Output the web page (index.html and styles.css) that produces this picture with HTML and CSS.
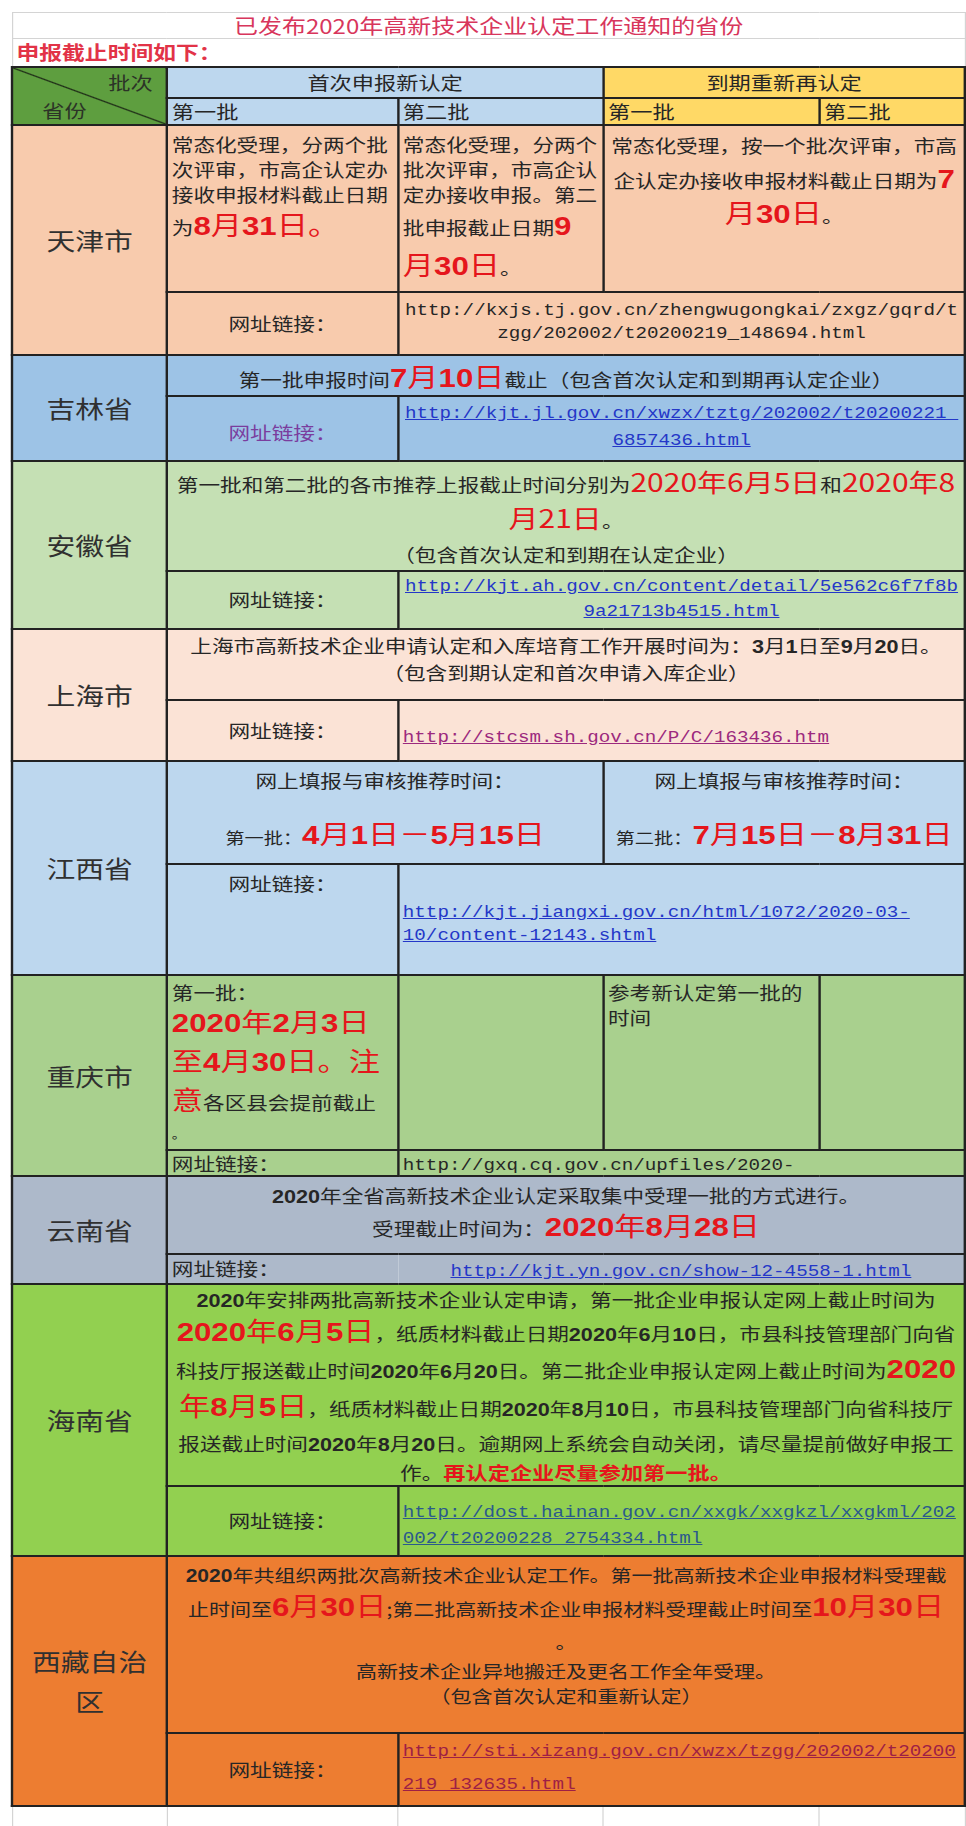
FILE: index.html
```html
<!DOCTYPE html>
<html lang="zh-CN">
<head>
<meta charset="utf-8">
<title>已发布2020年高新技术企业认定工作通知的省份</title>
<link rel="stylesheet" href="styles.css">
</head>
<body>
<div class="sheet">
<table class="grid">
<colgroup><col class="c1"><col class="c2"><col class="c3"><col class="c4"><col class="c5"></colgroup>
<tbody>
<tr class="r-title"><td colspan="5" class="title">已发布2020年高新技术企业认定工作通知的省份</td></tr>
<tr class="r-sub"><td colspan="5" class="subtitle">申报截止时间如下：</td></tr>

<tr class="r-h1">
  <td rowspan="2" class="corner"><div class="corner-in"><span class="c-top">批次</span><span class="c-bot">省份</span></div></td>
  <td colspan="2" class="h-blue ctr">首次申报新认定</td>
  <td colspan="2" class="h-yellow ctr">到期重新再认定</td>
</tr>
<tr class="r-h2">
  <td class="h-blue">第一批</td>
  <td class="h-blue">第二批</td>
  <td class="h-yellow">第一批</td>
  <td class="h-yellow">第二批</td>
</tr>

<!-- 天津市 -->
<tr class="r-tj1 bg-tj">
  <td rowspan="2" class="prov">天津市</td>
  <td class="top pt6">
    <div class="l25">常态化受理，分两个批</div>
    <div class="l25">次评审，市高企认定办</div>
    <div class="l25">接收申报材料截止日期</div>
    <div class="l40">为<span class="red"><b>8</b>月<b>31</b>日。</span></div>
  </td>
  <td class="top pt6">
    <div class="l25">常态化受理，分两个</div>
    <div class="l25">批次评审，市高企认</div>
    <div class="l25">定办接收申报。第二</div>
    <div class="l40">批申报截止日期<span class="red"><b>9</b></span></div>
    <div class="l40"><span class="red">月<b>30</b>日</span>。</div>
  </td>
  <td colspan="2" class="top ctr pt2">
    <div class="l35">常态化受理，按一个批次评审，市高</div>
    <div class="l35">企认定办接收申报材料截止日期为<span class="red"><b>7</b></span></div>
    <div class="l35"><span class="red">月<b>30</b>日</span>。</div>
  </td>
</tr>
<tr class="r-tj2 bg-tj">
  <td class="ctr">网址链接：</td>
  <td colspan="3" class="ctr"><div class="url plain l23">http://kxjs.tj.gov.cn/zhengwugongkai/zxgz/gqrd/t</div><div class="url plain l23">zgg/202002/t20200219_148694.html</div></td>
</tr>

<!-- 吉林省 -->
<tr class="r-jl1 bg-jl">
  <td rowspan="2" class="prov">吉林省</td>
  <td colspan="4" class="ctr pt4">第一批申报时间<span class="red"><b>7</b>月<b>10</b>日</span>截止（包含首次认定和到期再认定企业）</td>
</tr>
<tr class="r-jl2 bg-jl">
  <td class="ctr purple pt8">网址链接：</td>
  <td colspan="3" class="ctr"><div class="url blue l27">http://kjt.jl.gov.cn/xwzx/tztg/202002/t20200221_</div><div class="url blue l27">6857436.html</div></td>
</tr>

<!-- 安徽省 -->
<tr class="r-ah1 bg-ah">
  <td rowspan="2" class="prov">安徽省</td>
  <td colspan="4" class="ctr top pt4">
    <div class="l36">第一批和第二批的各市推荐上报截止时间分别为<span class="red-r">2020年6月5日</span>和<span class="red-r">2020年8</span></div>
    <div class="l36"><span class="red-r">月21日</span>。</div>
    <div class="l32">（包含首次认定和到期在认定企业）</div>
  </td>
</tr>
<tr class="r-ah2 bg-ah">
  <td class="ctr">网址链接：</td>
  <td colspan="3" class="ctr"><div class="url blue l25">http://kjt.ah.gov.cn/content/detail/5e562c6f7f8b</div><div class="url blue l25">9a21713b4515.html</div></td>
</tr>

<!-- 上海市 -->
<tr class="r-sh1 bg-sh">
  <td rowspan="2" class="prov">上海市</td>
  <td colspan="4" class="ctr top pt2">
    <div class="l27">上海市高新技术企业申请认定和入库培育工作开展时间为：<b class="n">3</b>月<b class="n">1</b>日至<b class="n">9</b>月<b class="n">20</b>日。</div>
    <div class="l27">（包含到期认定和首次申请入库企业）</div>
  </td>
</tr>
<tr class="r-sh2 bg-sh">
  <td class="ctr">网址链接：</td>
  <td colspan="3" class="pt8"><span class="url magenta">http://stcsm.sh.gov.cn/P/C/163436.htm</span></td>
</tr>

<!-- 江西省 -->
<tr class="r-jx1 bg-jx">
  <td rowspan="2" class="prov">江西省</td>
  <td colspan="2" class="ctr top pt3">
    <div class="l30">网上填报与审核推荐时间：</div>
    <div class="l34 mt24"><span class="small">第一批：</span><span class="red"><b>4</b>月<b>1</b>日－<b>5</b>月<b>15</b>日</span></div>
  </td>
  <td colspan="2" class="ctr top pt3">
    <div class="l30">网上填报与审核推荐时间：</div>
    <div class="l34 mt24"><span class="small">第二批：</span><span class="red"><b>7</b>月<b>15</b>日－<b>8</b>月<b>31</b>日</span></div>
  </td>
</tr>
<tr class="r-jx2 bg-jx">
  <td class="ctr top pt6">网址链接：</td>
  <td colspan="3" class="top pt37"><div class="url blue l23">http://kjt.jiangxi.gov.cn/html/1072/2020-03-</div><div class="url blue l23">10/content-12143.shtml</div></td>
</tr>

<!-- 重庆市 -->
<tr class="r-cq1 bg-cq">
  <td rowspan="2" class="prov">重庆市</td>
  <td class="top pt4">
    <div class="l25">第一批：</div>
    <div class="l39"><span class="red"><b>2020</b>年<b>2</b>月<b>3</b>日</span></div>
    <div class="l39"><span class="red">至<b>4</b>月<b>30</b>日。注</span></div>
    <div class="l39"><span class="red">意</span>各区县会提前截止</div>
    <div class="l24 tiny">。</div>
  </td>
  <td></td>
  <td class="top pt4">
    <div class="l25">参考新认定第一批的</div>
    <div class="l25">时间</div>
  </td>
  <td></td>
</tr>
<tr class="r-cq2 bg-cq">
  <td>网址链接：</td>
  <td colspan="3"><span class="url plain">http://gxq.cq.gov.cn/upfiles/2020-</span></td>
</tr>

<!-- 云南省 -->
<tr class="r-yn1 bg-yn">
  <td rowspan="2" class="prov">云南省</td>
  <td colspan="4" class="ctr top pt3">
    <div class="l30"><b class="n">2020</b>年全省高新技术企业认定采取集中受理一批的方式进行。</div>
    <div class="l36">受理截止时间为：<span class="red"><b>2020</b>年<b>8</b>月<b>28</b>日</span></div>
  </td>
</tr>
<tr class="r-yn2 bg-yn">
  <td class="noright">网址链接：</td>
  <td colspan="3" class="ctr noleft"><span class="url blue">http://kjt.yn.gov.cn/show-12-4558-1.html</span></td>
</tr>

<!-- 海南省 -->
<tr class="r-hn1 bg-hn">
  <td rowspan="2" class="prov">海南省</td>
  <td colspan="4" class="ctr top hn">
    <div class="l29"><b class="n">2020</b>年安排两批高新技术企业认定申请，第一批企业申报认定网上截止时间为</div>
    <div class="l38"><span class="red"><b>2020</b>年<b>6</b>月<b>5</b>日</span>，纸质材料截止日期<b class="n">2020</b>年<b class="n">6</b>月<b class="n">10</b>日，市县科技管理部门向省</div>
    <div class="l37">科技厅报送截止时间<b class="n">2020</b>年<b class="n">6</b>月<b class="n">20</b>日。第二批企业申报认定网上截止时间为<span class="red"><b>2020</b></span></div>
    <div class="l38"><span class="red">年<b>8</b>月<b>5</b>日</span>，纸质材料截止日期<b class="n">2020</b>年<b class="n">8</b>月<b class="n">10</b>日，市县科技管理部门向省科技厅</div>
    <div class="l33">报送截止时间<b class="n">2020</b>年<b class="n">8</b>月<b class="n">20</b>日。逾期网上系统会自动关闭，请尽量提前做好申报工</div>
    <div class="l25">作。<span class="red-s">再认定企业尽量参加第一批。</span></div>
  </td>
</tr>
<tr class="r-hn2 bg-hn">
  <td class="ctr">网址链接：</td>
  <td colspan="3" class="top pt13"><div class="url teal l26">http://dost.hainan.gov.cn/xxgk/xxgkzl/xxgkml/202</div><div class="url teal l26">002/t20200228_2754334.html</div></td>
</tr>

<!-- 西藏自治区 -->
<tr class="r-xz1 bg-xz">
  <td rowspan="2" class="prov l40">西藏自治<br>区</td>
  <td colspan="4" class="ctr top pt1 xz">
    <div class="l34"><b class="n">2020</b>年共组织两批次高新技术企业认定工作。第一批高新技术企业申报材料受理截</div>
    <div class="l34">止时间至<span class="red"><b>6</b>月<b>30</b>日</span>;第二批高新技术企业申报材料受理截止时间至<span class="red"><b>10</b>月<b>30</b>日</span></div>
    <div class="l32">。</div>
    <div class="l25">高新技术企业异地搬迁及更名工作全年受理。</div>
    <div class="l25">（包含首次认定和重新认定）</div>
  </td>
</tr>
<tr class="r-xz2 bg-xz">
  <td class="ctr">网址链接：</td>
  <td colspan="3" class="top pt2"><div class="url crimson l33">http://sti.xizang.gov.cn/xwzx/tzgg/202002/t20200</div><div class="url crimson l33">219_132635.html</div></td>
</tr>

<tr class="r-blank">
  <td></td><td></td><td></td><td></td><td></td>
</tr>
</tbody>
</table>
</div>
</body>
</html>
```

FILE: styles.css
```css
html, body {
  margin: 0;
  padding: 0;
  background: #ffffff;
}

body {
  font-family: "Noto Sans CJK SC", "Noto Sans", sans-serif;
  color: #262626;
  overflow: hidden;
}

/* the source sheet is rendered horizontally stretched */
.sheet {
  width: 805px;
  box-sizing: border-box;
  padding: 12px 0 0 9.2px;
  transform: scaleX(1.2);
  transform-origin: 0 0;
}

.grid {
  width: 794px;
  border-collapse: collapse;
  table-layout: fixed;
  font-size: 18px;
}

.c1 { width: 129px; }
.c2 { width: 192.5px; }
.c3 { width: 171px; }
.c4 { width: 180px; }
.c5 { width: 121.5px; }

.grid td {
  border: 2px solid #222;
  padding: 0 3px;
  white-space: nowrap;
  vertical-align: middle;
  line-height: 25px;
}

/* row heights */
.r-title { height: 26px; }
.r-sub { height: 28px; }
.r-h1 { height: 31px; }
.r-h2 { height: 27px; }
.r-tj1 { height: 167px; }
.r-tj2 { height: 63px; }
.r-jl1 { height: 41px; }
.r-jl2 { height: 65px; }
.r-ah1 { height: 110px; }
.r-ah2 { height: 58px; }
.r-sh1 { height: 71px; }
.r-sh2 { height: 61px; }
.r-jx1 { height: 103px; }
.r-jx2 { height: 111px; }
.r-cq1 { height: 175px; }
.r-cq2 { height: 26px; }
.r-yn1 { height: 78px; }
.r-yn2 { height: 30px; }
.r-hn1 { height: 202px; }
.r-hn2 { height: 70px; }
.r-xz1 { height: 177px; }
.r-xz2 { height: 73px; }
.r-blank { height: 30px; }

.grid .r-cq2 td { line-height: 20px; }

/* title rows */
.grid td.title {
  border: 1px solid #d4d4d4;
  text-align: center;
  color: #d8365c;
  font-size: 20px;
  line-height: 24px;
}

.grid td.subtitle {
  border: 1px solid #d4d4d4;
  border-bottom: 2px solid #222;
  color: #e23347;
  font-size: 19px;
  font-weight: 700;
  line-height: 26px;
}

/* header */
.grid td.corner {
  padding: 0;
  background-color: #5e9e3f;
  background-image: linear-gradient(to top right, transparent calc(50% - 1.2px), #1d2a16 50%, transparent calc(50% + 1.2px));
  color: #2c3327;
  font-size: 18.5px;
}

.corner-in {
  height: 56px;
  display: flex;
  flex-direction: column;
  justify-content: space-between;
}

.c-top {
  align-self: flex-end;
  padding-right: 11px;
  line-height: 28px;
}

.c-bot {
  align-self: flex-start;
  padding-left: 24px;
  line-height: 28px;
}

.grid td.h-blue { background: #bdd7ee; font-size: 18.5px; }
.grid td.h-yellow { background: #ffd966; font-size: 18.5px; }

/* province row colours */
.bg-tj td { background: #f8cbad; }
.bg-jl td { background: #9dc3e6; }
.bg-ah td { background: #c5e0b4; }
.bg-sh td { background: #fbe3d6; }
.bg-jx td { background: #bdd7ee; }
.bg-cq td { background: #a9d08e; }
.bg-yn td { background: #adb9ca; }
.bg-hn td { background: #92d050; }
.bg-xz td { background: #ed7d31; }

.grid .r-blank td {
  border: 1px solid #d4d4d4;
  border-top: 2px solid #222;
  border-bottom: none;
  background: #fff;
}

.grid td.prov {
  text-align: center;
  font-size: 24px;
  color: #303030;
}

/* alignment helpers */
.ctr { text-align: center; }
.grid td.top { vertical-align: top; }
.grid td.noright { border-right: none; }
.grid td.noleft { border-left: none; }
.pt1 { padding-top: 1px !important; }
.pt2 { padding-top: 2px !important; }
.pt3 { padding-top: 3px !important; }
.pt4 { padding-top: 4px !important; }
.pt6 { padding-top: 6px !important; }
.pt8 { padding-top: 8px !important; }
.pt13 { padding-top: 13px !important; }
.pt37 { padding-top: 37px !important; }
.mt24 { margin-top: 24px; }

.l22 { line-height: 22px; }
.l23 { line-height: 23px; }
.l24 { line-height: 24px; }
.l25 { line-height: 25px; }
.l26 { line-height: 26px; }
.l27 { line-height: 27px; }
.l29 { line-height: 29px; }
.l30 { line-height: 30px; }
.l32 { line-height: 32px; }
.l33 { line-height: 33px; }
.l34 { line-height: 34px; }
.l35 { line-height: 35px; }
.l36 { line-height: 36px; }
.l37 { line-height: 37px; }
.l38 { line-height: 38px; }
.l39 { line-height: 39px; }
.l40 { line-height: 40px; }
.grid td.l40 { line-height: 40px; }

/* text styles */
.red {
  color: #e5161c;
  font-size: 26px;
  line-height: 1;
}

.red b,
b.n {
  font-family: "Liberation Sans Narrow", "Liberation Sans", Arial, sans-serif;
  font-weight: 700;
  line-height: 1;
}

.red-r {
  color: #e5161c;
  font-size: 25px;
  line-height: 1;
}

.red-s {
  color: #e5161c;
  font-weight: 700;
  font-size: 18.5px;
  line-height: 1;
}

.small { font-size: 16px; }
.tiny { font-size: 12px; }
.purple { color: #7a3d9e; }

.hn { font-size: 18px; }
.xz { font-size: 17.5px; }

.url {
  font-family: "Liberation Mono", "DejaVu Sans Mono", monospace;
  font-size: 16px;
  white-space: pre;
  line-height: 1;
}

div.url.l23 { line-height: 23px; }
div.url.l25 { line-height: 25px; }
div.url.l26 { line-height: 26px; }
div.url.l27 { line-height: 27px; }
div.url.l33 { line-height: 33px; }

.url.blue { color: #2437c8; text-decoration: underline; }
.url.magenta { color: #9c2a7e; text-decoration: underline; }
.url.teal { color: #2b5a8c; text-decoration: underline; }
.url.crimson { color: #9e1f45; text-decoration: underline; }
.url.plain { color: #262626; }
```
